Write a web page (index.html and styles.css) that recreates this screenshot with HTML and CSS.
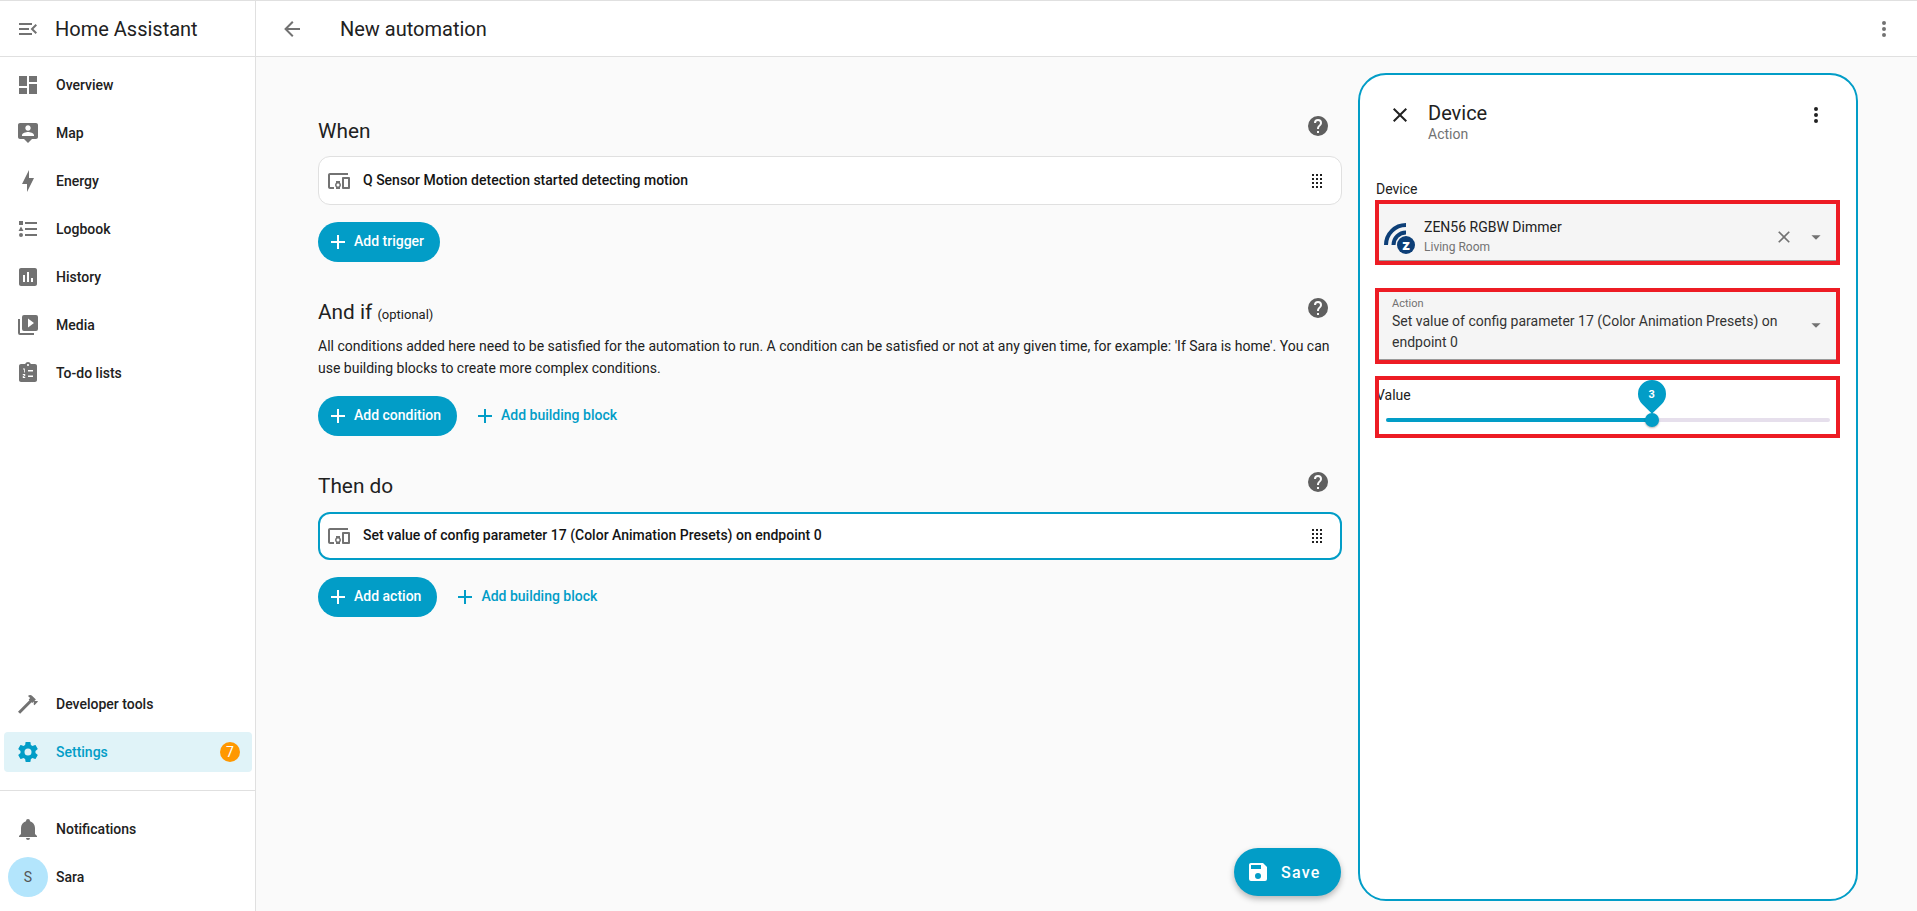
FILE: index.html
```html
<!DOCTYPE html>
<html lang="en">
<head>
<meta charset="utf-8">
<title>New automation</title>
<link rel="stylesheet" href="styles.css">
</head>
<body>
<div class="app">
  <aside class="sidebar">
    <div class="side-head">
      <svg class="icon grey" viewBox="0 0 24 24"><path d="M21,15.61L19.59,17L14.58,12L19.59,7L21,8.39L17.44,12L21,15.61M3,6H16V8H3V6M3,13V11H13V13H3M3,18V16H16V18H3Z"/></svg>
      <span class="brand">Home Assistant</span>
    </div>
    <nav class="nav">
      <a class="item"><svg class="icon grey" viewBox="0 0 24 24"><path d="M13,3V9H21V3M13,21H21V11H13M3,21H11V15H3M3,13H11V3H3V13Z"/></svg><span>Overview</span></a>
      <a class="item"><svg class="icon grey" viewBox="0 0 24 24"><path d="M20 2H4C2.9 2 2 2.9 2 4V16C2 17.1 2.9 18 4 18H8L12 22L16 18H20C21.1 18 22 17.1 22 16V4C22 2.9 21.1 2 20 2M12 4.3C13.5 4.3 14.7 5.5 14.7 7C14.7 8.5 13.5 9.7 12 9.7C10.5 9.7 9.3 8.5 9.3 7C9.3 5.5 10.5 4.3 12 4.3M18 15H6V14.1C6 12.1 10 11 12 11C14 11 18 12.1 18 14.1V15Z"/></svg><span>Map</span></a>
      <a class="item"><svg class="icon grey" viewBox="0 0 24 24"><path d="M11 15H6L13 1V9H18L11 23V15Z"/></svg><span>Energy</span></a>
      <a class="item"><svg class="icon grey" viewBox="0 0 24 24"><path d="M5,9.5L7.5,14H2.5L5,9.5M3,4H7V8H3V4M5,20A2,2 0 0,0 7,18A2,2 0 0,0 5,16A2,2 0 0,0 3,18A2,2 0 0,0 5,20M9,5V7H21V5H9M9,19H21V17H9V19M9,13H21V11H9V13Z"/></svg><span>Logbook</span></a>
      <a class="item"><svg class="icon grey" viewBox="0 0 24 24"><path d="M19 3H5C3.9 3 3 3.9 3 5V19C3 20.1 3.9 21 5 21H19C20.1 21 21 20.1 21 19V5C21 3.9 20.1 3 19 3M9 17H7V10H9V17M13 17H11V7H13V17M17 17H15V13H17V17Z"/></svg><span>History</span></a>
      <a class="item"><svg class="icon grey" viewBox="0 0 24 24"><path d="M4,6H2V20A2,2 0 0,0 4,22H18V20H4V6M20,2H8A2,2 0 0,0 6,4V16A2,2 0 0,0 8,18H20A2,2 0 0,0 22,16V4A2,2 0 0,0 20,2M12,14.5V5.5L18,10L12,14.5Z"/></svg><span>Media</span></a>
      <a class="item"><svg class="icon grey" viewBox="0 0 24 24"><path fill-rule="evenodd" d="M19 3H14.82C14.4 1.84 13.3 1 12 1S9.6 1.84 9.18 3H5C3.9 3 3 3.9 3 5V19C3 20.1 3.9 21 5 21H19C20.1 21 21 20.1 21 19V5C21 3.9 20.1 3 19 3M12 3C12.55 3 13 3.45 13 4S12.55 5 12 5 11 4.55 11 4 11.45 3 12 3M12 9H17V10.5H12V9M12 14.5H17V16H12V14.5M7 7.5H8.8V11.5H8V8.5H7V7.5M6.8 13H9.2V15.2H7.8V16H9.2V17H6.8V14.8H8.2V14H6.8V13Z"/></svg><span>To-do lists</span></a>
    </nav>
    <div class="nav-bottom">
      <a class="item"><svg class="icon grey" viewBox="0 0 24 24"><path d="M2 19.63L13.43 8.2L12.72 7.5L14.14 6.07L12 3.89C13.2 2.7 15.09 2.7 16.27 3.89L19.87 7.5L18.45 8.91H21.29L22 9.62L18.45 13.21L17.74 12.5V9.62L16.27 11.04L15.56 10.33L4.13 21.76L2 19.63Z"/></svg><span>Developer tools</span></a>
      <a class="item active"><svg class="icon" viewBox="0 0 24 24"><path d="M12,15.5A3.5,3.5 0 0,1 8.5,12A3.5,3.5 0 0,1 12,8.5A3.5,3.5 0 0,1 15.5,12A3.5,3.5 0 0,1 12,15.5M19.43,12.97C19.47,12.65 19.5,12.33 19.5,12C19.5,11.67 19.47,11.34 19.43,11L21.54,9.37C21.73,9.22 21.78,8.95 21.66,8.73L19.66,5.27C19.54,5.05 19.27,4.96 19.05,5.05L16.56,6.05C16.04,5.66 15.5,5.32 14.87,5.07L14.5,2.42C14.46,2.18 14.25,2 14,2H10C9.75,2 9.54,2.18 9.5,2.42L9.13,5.07C8.5,5.32 7.96,5.66 7.44,6.05L4.95,5.05C4.73,4.96 4.46,5.05 4.34,5.27L2.34,8.73C2.21,8.95 2.27,9.22 2.46,9.37L4.57,11C4.53,11.34 4.5,11.67 4.5,12C4.5,12.33 4.53,12.65 4.57,12.97L2.46,14.63C2.27,14.78 2.21,15.05 2.34,15.27L4.34,18.73C4.46,18.95 4.73,19.03 4.95,18.95L7.44,17.94C7.96,18.34 8.5,18.68 9.13,18.93L9.5,21.58C9.54,21.82 9.75,22 10,22H14C14.25,22 14.46,21.82 14.5,21.58L14.87,18.93C15.5,18.67 16.04,18.34 16.56,17.94L19.05,18.95C19.27,19.03 19.54,18.95 19.66,18.73L21.66,15.27C21.78,15.05 21.73,14.78 21.54,14.63L19.43,12.97Z"/></svg><span>Settings</span><b class="badge">7</b></a>
      <div class="divider"></div>
      <a class="item"><svg class="icon grey" viewBox="0 0 24 24"><path d="M21,19V20H3V19L5,17V11C5,7.9 7.03,5.17 10,4.29C10,4.19 10,4.1 10,4A2,2 0 0,1 12,2A2,2 0 0,1 14,4C14,4.1 14,4.19 14,4.29C16.97,5.17 19,7.9 19,11V17L21,19M14,21A2,2 0 0,1 12,23A2,2 0 0,1 10,21"/></svg><span>Notifications</span></a>
      <a class="item user"><i class="avatar">S</i><span>Sara</span></a>
    </div>
  </aside>

  <div class="main">
    <header class="topbar">
      <svg class="icon grey" viewBox="0 0 24 24"><path d="M20,11V13H8L13.5,18.5L12.08,19.92L4.16,12L12.08,4.08L13.5,5.5L8,11H20Z"/></svg>
      <h1 class="title">New automation</h1>
      <svg class="icon grey" viewBox="0 0 24 24"><path d="M12,16A2,2 0 0,1 14,18A2,2 0 0,1 12,20A2,2 0 0,1 10,18A2,2 0 0,1 12,16M12,10A2,2 0 0,1 14,12A2,2 0 0,1 12,14A2,2 0 0,1 10,12A2,2 0 0,1 12,10M12,4A2,2 0 0,1 14,6A2,2 0 0,1 12,8A2,2 0 0,1 10,6A2,2 0 0,1 12,4Z"/></svg>
    </header>
    <div class="content">
      <section class="editor">
        <div class="sec-head first">
          <h2 class="h">When</h2>
          <svg class="icon help" viewBox="0 0 24 24"><path d="M15.07,11.25L14.17,12.17C13.45,12.89 13,13.5 13,15H11V14.5C11,13.39 11.45,12.39 12.17,11.67L13.41,10.41C13.78,10.05 14,9.55 14,9C14,7.89 13.1,7 12,7A2,2 0 0,0 10,9H8A4,4 0 0,1 12,5A4,4 0 0,1 16,9C16,9.88 15.64,10.67 15.07,11.25M13,19H11V17H13M12,2A10,10 0 0,0 2,12A10,10 0 0,0 12,22A10,10 0 0,0 22,12C22,6.47 17.5,2 12,2Z"/></svg>
        </div>
        <div class="card">
          <svg class="icon grey" viewBox="0 0 24 24"><path d="M3 6H21V4H3C1.9 4 1 4.9 1 6V18C1 19.1 1.9 20 3 20H7V18H3V6M13 12H9V13.78C8.39 14.33 8 15.11 8 16C8 16.89 8.39 17.67 9 18.22V20H13V18.22C13.61 17.67 14 16.88 14 16S13.61 14.33 13 13.78V12M11 17.5C10.17 17.5 9.5 16.83 9.5 16S10.17 14.5 11 14.5 12.5 15.17 12.5 16 11.83 17.5 11 17.5M22 8H16C15.5 8 15 8.5 15 9V19C15 19.5 15.5 20 16 20H22C22.5 20 23 19.5 23 19V9C23 8.5 22.5 8 22 8M21 18H17V10H21V18Z"/></svg>
          <span class="card-text">Q Sensor Motion detection started detecting motion</span>
          <svg class="grip" viewBox="0 0 10 14"><path d="M0 0h2v2H0zM4 0h2v2H4zM8 0h2v2H8zM0 4h2v2H0zM4 4h2v2H4zM8 4h2v2H8zM0 8h2v2H0zM4 8h2v2H4zM8 8h2v2H8zM0 12h2v2H0zM4 12h2v2H4zM8 12h2v2H8z"/></svg>
        </div>
        <div class="btn-row">
          <button class="btn"><svg class="icon" viewBox="0 0 24 24"><path d="M19,13H13V19H11V13H5V11H11V5H13V11H19V13Z"/></svg>Add trigger</button>
        </div>

        <div class="sec-head">
          <h2 class="h">And if <small class="opt">(optional)</small></h2>
          <svg class="icon help" viewBox="0 0 24 24"><path d="M15.07,11.25L14.17,12.17C13.45,12.89 13,13.5 13,15H11V14.5C11,13.39 11.45,12.39 12.17,11.67L13.41,10.41C13.78,10.05 14,9.55 14,9C14,7.89 13.1,7 12,7A2,2 0 0,0 10,9H8A4,4 0 0,1 12,5A4,4 0 0,1 16,9C16,9.88 15.64,10.67 15.07,11.25M13,19H11V17H13M12,2A10,10 0 0,0 2,12A10,10 0 0,0 12,22A10,10 0 0,0 22,12C22,6.47 17.5,2 12,2Z"/></svg>
        </div>
        <p class="desc">All conditions added here need to be satisfied for the automation to run. A condition can be satisfied or not at any given time, for example: 'If Sara is home'. You can use building blocks to create more complex conditions.</p>
        <div class="btn-row">
          <button class="btn"><svg class="icon" viewBox="0 0 24 24"><path d="M19,13H13V19H11V13H5V11H11V5H13V11H19V13Z"/></svg>Add condition</button>
          <button class="btn ghost"><svg class="icon" viewBox="0 0 24 24"><path d="M19,13H13V19H11V13H5V11H11V5H13V11H19V13Z"/></svg>Add building block</button>
        </div>

        <div class="sec-head">
          <h2 class="h">Then do</h2>
          <svg class="icon help" viewBox="0 0 24 24"><path d="M15.07,11.25L14.17,12.17C13.45,12.89 13,13.5 13,15H11V14.5C11,13.39 11.45,12.39 12.17,11.67L13.41,10.41C13.78,10.05 14,9.55 14,9C14,7.89 13.1,7 12,7A2,2 0 0,0 10,9H8A4,4 0 0,1 12,5A4,4 0 0,1 16,9C16,9.88 15.64,10.67 15.07,11.25M13,19H11V17H13M12,2A10,10 0 0,0 2,12A10,10 0 0,0 12,22A10,10 0 0,0 22,12C22,6.47 17.5,2 12,2Z"/></svg>
        </div>
        <div class="card selected">
          <svg class="icon grey" viewBox="0 0 24 24"><path d="M3 6H21V4H3C1.9 4 1 4.9 1 6V18C1 19.1 1.9 20 3 20H7V18H3V6M13 12H9V13.78C8.39 14.33 8 15.11 8 16C8 16.89 8.39 17.67 9 18.22V20H13V18.22C13.61 17.67 14 16.88 14 16S13.61 14.33 13 13.78V12M11 17.5C10.17 17.5 9.5 16.83 9.5 16S10.17 14.5 11 14.5 12.5 15.17 12.5 16 11.83 17.5 11 17.5M22 8H16C15.5 8 15 8.5 15 9V19C15 19.5 15.5 20 16 20H22C22.5 20 23 19.5 23 19V9C23 8.5 22.5 8 22 8M21 18H17V10H21V18Z"/></svg>
          <span class="card-text">Set value of config parameter 17 (Color Animation Presets) on endpoint 0</span>
          <svg class="grip" viewBox="0 0 10 14"><path d="M0 0h2v2H0zM4 0h2v2H4zM8 0h2v2H8zM0 4h2v2H0zM4 4h2v2H4zM8 4h2v2H8zM0 8h2v2H0zM4 8h2v2H4zM8 8h2v2H8zM0 12h2v2H0zM4 12h2v2H4zM8 12h2v2H8z"/></svg>
        </div>
        <div class="btn-row">
          <button class="btn"><svg class="icon" viewBox="0 0 24 24"><path d="M19,13H13V19H11V13H5V11H11V5H13V11H19V13Z"/></svg>Add action</button>
          <button class="btn ghost"><svg class="icon" viewBox="0 0 24 24"><path d="M19,13H13V19H11V13H5V11H11V5H13V11H19V13Z"/></svg>Add building block</button>
        </div>
      </section>

      <aside class="panel">
        <div class="panel-head">
          <svg class="icon dark" viewBox="0 0 24 24"><path d="M19,6.41L17.59,5L12,10.59L6.41,5L5,6.41L10.59,12L5,17.59L6.41,19L12,13.41L17.59,19L19,17.59L13.41,12L19,6.41Z"/></svg>
          <div class="panel-titles">
            <div class="panel-title">Device</div>
            <div class="panel-sub">Action</div>
          </div>
          <svg class="icon dark" viewBox="0 0 24 24"><path d="M12,16A2,2 0 0,1 14,18A2,2 0 0,1 12,20A2,2 0 0,1 10,18A2,2 0 0,1 12,16M12,10A2,2 0 0,1 14,12A2,2 0 0,1 12,14A2,2 0 0,1 10,12A2,2 0 0,1 12,10M12,4A2,2 0 0,1 14,6A2,2 0 0,1 12,8A2,2 0 0,1 10,6A2,2 0 0,1 12,4Z"/></svg>
        </div>
        <div class="field-label">Device</div>
        <div class="mark">
          <div class="field device">
            <svg class="zwave" viewBox="0 0 36 36">
              <path class="arc" d="M4 26A20 20 0 0 1 24 6"/>
              <path class="arc" d="M11.5 26A12.5 12.5 0 0 1 24 13.5"/>
              <circle class="zdisc" cx="24" cy="26" r="9"/>
              <text class="zletter" x="24" y="31" text-anchor="middle">z</text>
            </svg>
            <div class="dev-text">
              <div class="dev-name">ZEN56 RGBW Dimmer</div>
              <div class="dev-area">Living Room</div>
            </div>
            <svg class="icon-s grey" viewBox="0 0 24 24"><path d="M19,6.41L17.59,5L12,10.59L6.41,5L5,6.41L10.59,12L5,17.59L6.41,19L12,13.41L17.59,19L19,17.59L13.41,12L19,6.41Z"/></svg>
            <svg class="icon-s grey caret" viewBox="0 0 24 24"><path d="M7,10L12,15L17,10H7Z"/></svg>
          </div>
        </div>
        <div class="mark action-mark">
          <div class="field action">
            <div class="action-body">
              <div class="float-label">Action</div>
              <div class="action-text">Set value of config parameter 17 (Color Animation Presets) on endpoint 0</div>
            </div>
            <svg class="icon-s grey caret" viewBox="0 0 24 24"><path d="M7,10L12,15L17,10H7Z"/></svg>
          </div>
        </div>
        <div class="mark value-mark">
          <div class="value-label">Value</div>
          <div class="slider">
            <div class="fill" style="width:60%"></div>
            <div class="knob" style="left:60%"></div>
            <div class="pin" style="left:60%"><span>3</span></div>
          </div>
        </div>
      </aside>
    </div>
    <button class="fab"><svg class="icon" viewBox="0 0 24 24"><path d="M15,9H5V5H15M12,19A3,3 0 0,1 9,16A3,3 0 0,1 12,13A3,3 0 0,1 15,16A3,3 0 0,1 12,19M17,3H5C3.89,3 3,3.9 3,5V19A2,2 0 0,0 5,21H19A2,2 0 0,0 21,19V7L17,3Z"/></svg>Save</button>
  </div>
</div>
</body>
</html>
```
FILE: styles.css
```css
* { box-sizing: border-box; }
html, body { margin: 0; height: 100%; overflow: hidden; }
body { font-family: Roboto, "Liberation Sans", sans-serif; font-size: 14px; color: #212121; background: #fff; }
.app { display: flex; height: 911px; border-top: 1px solid #e0e0e0; position: relative; }

.icon { width: 24px; height: 24px; flex: none; fill: currentColor; display: block; }
.icon-s { width: 20px; height: 20px; flex: none; fill: currentColor; display: block; }
.grey { color: #727272; }
.dark { color: #212121; }

.sidebar { width: 256px; flex: none; display: flex; flex-direction: column; border-right: 1px solid #e0e0e0; background: #fff; }
.side-head { height: 56px; flex: none; display: flex; align-items: center; gap: 15px; padding: 0 0 0 16px; border-bottom: 1px solid #e0e0e0; }
.brand { font-size: 20px; color: #212121; }
.nav { display: flex; flex-direction: column; gap: 8px; padding-top: 8px; }
.nav-bottom { margin-top: auto; display: flex; flex-direction: column; padding-bottom: 14px; }
.nav-bottom .item + .item { margin-top: 8px; }
.item { height: 40px; margin: 0 3px 0 4px; padding: 0 12px; display: flex; align-items: center; gap: 16px; border-radius: 4px; font-weight: 500; color: #212121; }
.item.active { background: #e0f3f8; color: #029dc7; }
.item.user { padding: 0 4px; gap: 8px; }
.badge { margin-left: auto; width: 20px; height: 20px; border-radius: 50%; background: #ff9800; color: #fff; font-size: 14px; font-weight: 400; display: flex; align-items: center; justify-content: center; }
.divider { height: 1px; background: #e0e0e0; margin: 18px 0 18px; }
.nav-bottom .divider + .item { margin-top: 0; }
.avatar { width: 40px; height: 40px; border-radius: 50%; background: #b3e5fc; color: #555; font-style: normal; font-weight: 400; font-size: 14px; display: flex; align-items: center; justify-content: center; flex: none; }

.main { flex: 1; min-width: 0; display: flex; flex-direction: column; background: #fafafa; position: relative; }
.topbar { height: 56px; flex: none; display: flex; align-items: center; background: #fff; border-bottom: 1px solid #e0e0e0; padding: 0 21px 0 24px; }
.title { margin: 0 0 0 36px; flex: 1; font-size: 20px; font-weight: 400; color: #212121; }
.content { flex: 1; min-height: 0; display: flex; align-items: flex-start; gap: 16px; padding: 16px 0 0 62px; }

.editor { width: 1024px; flex: none; padding-top: 41px; }
.sec-head { height: 32px; display: flex; align-items: center; justify-content: space-between; margin-top: 34px; padding-right: 12px; }
.sec-head.first { margin-top: 0; }
.sec-head.first .h { margin-top: 2px; }
.h { margin: 0; font-size: 20.8px; font-weight: 400; color: #212121; }
.opt { font-size: 13px; }
.help { color: #5f5f5f; margin-bottom: 8px; }
.card { height: 49px; margin-top: 10px; padding: 0 16px 0 8px; display: flex; align-items: center; gap: 12px; background: #fff; border: 1px solid #e0e0e0; border-radius: 12px; }
.card.selected { height: 48px; border: 2px solid #029dc7; padding-left: 7px; padding-right: 15px; }
.card-text { flex: 1; padding-bottom: 2px; font-weight: 500; color: #141414; }
.grip { width: 10px; height: 14px; fill: #212121; flex: none; margin-right: 3px; }
.btn-row { margin-top: 17px; display: flex; gap: 8px; }
.btn { height: 40px; border: 0; border-radius: 20px; padding: 0 16px 2px 8px; display: inline-flex; align-items: center; gap: 4px; background: #029dc7; color: #fff; font: 500 14px Roboto, sans-serif; }
.btn .icon { margin-top: 2px; }
.btn.ghost { background: transparent; color: #029dc7; }
.desc { margin: 7px 0 0; line-height: 22px; color: #212121; }
.desc + .btn-row { margin-top: 17px; }

.panel { width: 500px; height: 828px; flex: none; padding: 0 17px 0 16px; background: #fff; border: 2px solid #029dc7; border-radius: 28px; }
.panel-head { display: flex; align-items: flex-start; gap: 16px; padding: 26px 11px 0 12px; }
.panel-head .icon { margin-top: 2px; }
.panel-titles { flex: 1; }
.panel-title { font-size: 20px; line-height: 24px; color: #212121; }
.panel-sub { line-height: 18px; color: #727272; }
.field-label { margin-top: 36px; line-height: 20px; color: #212121; }
.mark { margin: 1px -1px 0; border: 4px solid #ed1c24; overflow: hidden; }
.field { background: #f5f5f5; border-bottom: 1px solid #9a9a9a; display: flex; align-items: center; }
.device { height: 57px; padding: 9px 9px 0 3px; }
.zwave { width: 36px; height: 36px; flex: none; margin-right: 6px; }
.arc { fill: none; stroke: #0d3f77; stroke-width: 4; }
.zdisc { fill: #0d3f77; }
.zletter { fill: #fff; font: 900 15px Roboto, sans-serif; }
.dev-text { flex: 1; }
.dev-name { line-height: 20px; color: #212121; }
.dev-area { line-height: 20px; font-size: 12px; color: #727272; }
.icon-s.caret { width: 22px; height: 22px; }
.device .caret { margin-left: 11px; }
.action-mark { margin-top: 23px; }
.action { height: 68px; padding: 5px 9px 7px 13px; }
.action-body { flex: 1; min-width: 0; padding-right: 4px; }
.float-label { font-size: 11px; line-height: 14px; color: #727272; }
.action-text { line-height: 21px; color: #333; }
.value-mark { margin-top: 12px; height: 62px; background: #fff; }
.value-label { margin: 5px 0 0 -3px; line-height: 20px; color: #212121; }
.slider { position: relative; height: 4px; margin: 13px 6px 0 7px; border-radius: 2px; background: #e6dfec; }
.fill { height: 4px; border-radius: 2px; background: #029dc7; }
.knob { position: absolute; top: -5px; width: 14px; height: 14px; margin-left: -7px; border-radius: 50%; background: #029dc7; box-shadow: 0 1px 2px rgba(0,0,0,.3); }
.pin { position: absolute; top: -38px; width: 28px; height: 28px; margin-left: -14px; border-radius: 50% 50% 0 50%; background: #029dc7; transform: rotate(45deg); display: flex; align-items: center; justify-content: center; }
.pin span { transform: rotate(-45deg); color: #fff; font-size: 11px; font-weight: 700; }

.fab { position: absolute; left: 978px; top: 847px; height: 48px; border: 0; border-radius: 24px; padding: 0 20px 0 12px; display: inline-flex; align-items: center; gap: 11px; background: #029dc7; color: #fff; font: 500 16px Roboto, sans-serif; letter-spacing: 1.25px; box-shadow: 0 3px 6px rgba(0,0,0,.28); }
```
